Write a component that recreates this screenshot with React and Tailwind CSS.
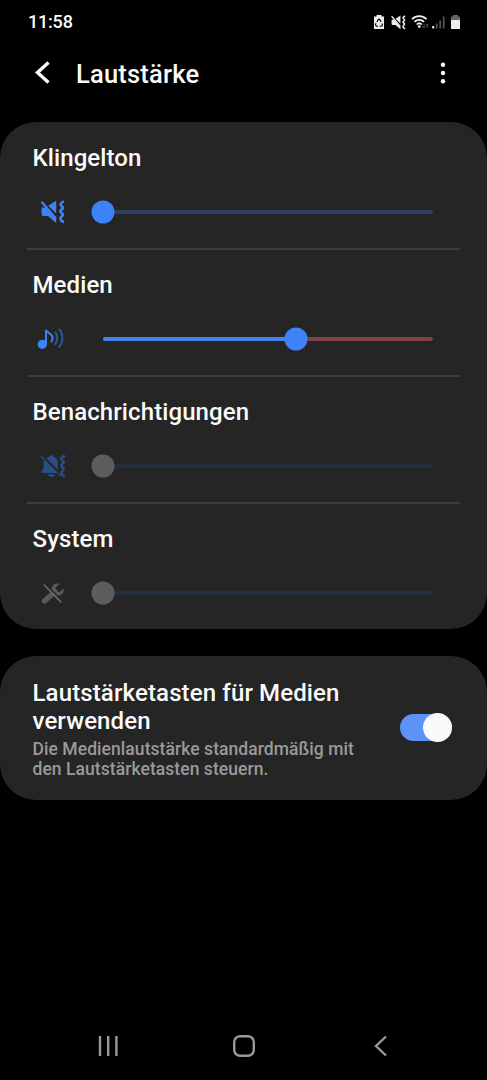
import { useState } from 'react';
import clsx from 'clsx';

function Waves({ x = 0, y = 0 }) {
  return (
    <svg x={x} y={y} width="28" height="28" overflow="visible">
      <path
        d="M25 3.4C20.8 5 21 6.6 22.8 8.2S24.3 10.2 22.5 11.6 21.3 14 22.8 15.2 24.3 17.2 22.5 18.6 20.8 22.6 25 24.2"
        fill="none"
        stroke="currentColor"
        strokeWidth="2.6"
      />
    </svg>
  );
}

function MuteVibrateIcon({ className = 'h-7 w-7' }) {
  return (
    <svg className={className} viewBox="0 0 28 28" fill="currentColor">
      <path d="M9.2 7.8 17.2 2.4v13.2z" />
      <path d="M2.6 9.4h4.8L17.2 20.4v4.6L9 18.1H3.8l-1.2-1.2z" />
      <path d="M2.6 3.8 17 20.4" stroke="currentColor" strokeWidth="2.2" />
      <Waves />
    </svg>
  );
}

function MediaIcon() {
  return (
    <svg className="h-7 w-7" viewBox="0 0 28 28" fill="none" stroke="currentColor" strokeWidth="2">
      <circle cx="6.3" cy="19.3" r="4.6" fill="currentColor" stroke="none" />
      <path d="M10 19.3V4.8c.4 3 6.6 3.6 6.6 8 0 1.8-.5 3-1.5 4.2" />
      <path d="M19 6.6c1.5 2 2.2 4.2 2.2 6.6s-.8 4.600-2.400 6.800" opacity=".55" />
      <path d="M23 4c2.300 2.600 3.400 5.700 3.400 9.100s-1.200 6.500-3.600 9.300" opacity=".55" />
    </svg>
  );
}

function BellMuteIcon() {
  return (
    <svg className="h-7 w-7" viewBox="0 0 28 28" fill="currentColor">
      <path d="M7.2 6.400c.9-1 2-1.600 3.400-1.800 0-2.200 3.400-2.200 3.400 0 3 .8 4.800 3.100 4.800 6.200v4c0 1.500.4 2.700 1 3.800z" />
      <path d="M5.400 8.200 18 21H2.200v-1.500c1.700-1.300 2.400-2.500 2.400-4.400v-4c0-1 .3-2 .8-2.900z" />
      <path d="M8.600 22.200c1.600 3.600 5.800 3.600 7.400 0z" />
      <path d="M2.200 4.200 21.200 23.800" fill="none" stroke="currentColor" strokeWidth="1.400" />
      <path d="M4.600 5 21.600 22.300" fill="none" stroke="#252525" strokeWidth="1.400" />
      <Waves x={0.8} y={0.4} />
    </svg>
  );
}

function SystemIcon() {
  return (
    <svg className="h-7 w-7" viewBox="0 0 28 28">
      <path d="M5.400 22 16 12.800" fill="none" stroke="currentColor" strokeWidth="5.400" strokeLinecap="round" />
      <path
        d="M20.600 4.900c-3.400-1.200-7.800 1-8 5.200l-.2 3 4 4 3.200-.6c3.600-.2 5.900-3.400 4.800-7l-3.700 3.400-3.300-.8-.7-3.500z"
        fill="currentColor"
      />
      <path d="M6.200 4.700 23 22" stroke="#252525" strokeWidth="1.400" />
      <path d="M4.800 5.500 22.300 23.400" stroke="#6a6a6a" strokeWidth="1.700" />
    </svg>
  );
}

function StatusBar() {
  return (
    <div className="flex h-11 items-center justify-between pr-[26px] pl-7">
      <span className="text-[18px] leading-[26px] font-medium tracking-[-0.2px]">11:58</span>
      <div className="flex items-center text-[#ededed]">
        <svg className="mr-[5px] h-4 w-3" viewBox="0 0 12 16">
          <path d="M3.500 1h5v1.500H11V15H1V2.500h2.500z" fill="currentColor" />
          <path d="m3.900 8 1.500-2.600h1.200L8.100 8M8.900 9.500l.6 1.300-.9 1.500H6.700M3.100 9.200l-.7 1.400.9 1.700h1.800" fill="none" stroke="#000" strokeWidth="1.100" />
        </svg>
        <MuteVibrateIcon className="mr-1 h-[17px] w-[17px]" />
        <svg className="mr-[3px] h-4 w-[18px]" viewBox="0 0 18 16" fill="none" stroke="currentColor" strokeWidth="1.700">
          <path d="M1 5.200c4-4 10.500-4 14.500 0M3.400 7.900c2.800-2.700 7-2.700 9.700 0M5.700 10.500c1.500-1.500 3.700-1.500 5.200 0" />
          <circle cx="8.300" cy="12.600" r="1.400" fill="currentColor" stroke="none" />
          <path d="M13 10v4m-1.500-1.500L13 14l1.400-1.500M16.200 14v-4m-1.400 1.500 1.400-1.500 1.400 1.500" stroke="#555" strokeWidth="1" />
        </svg>
        <svg className="mr-[5px] h-4 w-[13px]" viewBox="0 0 13 16">
          <path d="M1.200 12v2.500" stroke="currentColor" strokeWidth="2" />
          <path d="M4.700 9.500v5M8.200 6.500v8M11.700 2.500v12" stroke="#555" strokeWidth="1.700" />
        </svg>
        <svg className="h-4 w-[11px]" viewBox="0 0 11 16">
          <path d="M3 1h5v1.500h2V7H1V2.500h2z" fill="#666" />
          <path d="M1 6h9v9H1z" fill="currentColor" />
        </svg>
      </div>
    </div>
  );
}

const CHANNELS = [
  { name: 'Klingelton', icon: MuteVibrateIcon, value: 0, iconClass: 'text-[#3d82f6]', track: 'bg-[#2b4160]', thumb: 'bg-[#3d82f6]' },
  { name: 'Medien', icon: MediaIcon, value: 58.6, iconClass: 'text-[#3d82f6] -ml-[3px] mr-[3px]', track: 'bg-[#7d4147]', thumb: 'bg-[#3d82f6]' },
  { name: 'Benachrichtigungen', icon: BellMuteIcon, value: 0, iconClass: 'text-[#2b4d86]', track: 'bg-[#262e3c]', thumb: 'bg-[#5c5c5c]' },
  { name: 'System', icon: SystemIcon, value: 0, iconClass: 'text-[#5a5a5a]', track: 'bg-[#262e3c]', thumb: 'bg-[#5c5c5c]' },
];

function VolumeRow({ channel, value, onChange }) {
  const Icon = channel.icon;
  const pick = (e) => {
    const box = e.currentTarget.getBoundingClientRect();
    onChange(Math.max(0, Math.min(100, ((e.clientX - box.left) / box.width) * 100)));
  };

  return (
    <section className="mx-[27px] h-[127px] border-b-2 border-[#3d3d3d] pt-[19px] last:border-0">
      <h2 className="pl-[5.5px] text-[24px] leading-8 font-medium tracking-[0.1px]">{channel.name}</h2>
      <div className="mt-6 flex h-7 items-center pr-[27px] pl-3">
        <span className={clsx('w-7', channel.iconClass)}>
          <Icon />
        </span>
        <div className="ml-auto flex h-6 w-[330px] items-center" onClick={pick}>
          <div className={clsx('relative h-1 w-full rounded-full', channel.track)}>
            <div className="h-full rounded-full bg-[#4684ea]" style={{ width: `${value}%` }} />
            <div
              className={clsx('absolute top-1/2 h-[23px] w-[23px] -translate-x-1/2 -translate-y-1/2 rounded-full', channel.thumb)}
              style={{ left: `${value}%` }}
            />
          </div>
        </div>
      </div>
    </section>
  );
}

export default function App() {
  const [values, setValues] = useState(CHANNELS.map((c) => c.value));
  const [mediaKeys, setMediaKeys] = useState(true);

  return (
    <div className="flex h-[1080px] w-[487px] flex-col overflow-hidden bg-black font-['Roboto',sans-serif] text-[#fafafa]">
      <StatusBar />

      <header className="flex h-[78px] items-start pt-3 pr-[38px] pl-[34px]">
        <button type="button" aria-label="Zurück" className="mt-[4px]">
          <svg className="h-[26px] w-[18px]" viewBox="0 0 18 26" fill="none" stroke="currentColor" strokeWidth="3.400">
            <path d="M14.500 2.500 3.500 12.500l11 10" />
          </svg>
        </button>
        <h1 className="ml-6 text-[25.5px] leading-9 font-medium tracking-[0.2px]">Lautstärke</h1>
        <button type="button" aria-label="Weitere Optionen" className="mt-[5px] ml-auto">
          <svg className="h-6 w-3" viewBox="0 0 12 24" fill="currentColor">
            <circle cx="6" cy="3.700" r="2.200" />
            <circle cx="6" cy="12" r="2.200" />
            <circle cx="6" cy="20.300" r="2.200" />
          </svg>
        </button>
      </header>

      <main className="flex flex-col gap-[27px]">
        <div className="h-[507px] overflow-hidden rounded-[36px] bg-[#252525] pt-px">
          {CHANNELS.map((channel, i) => (
            <VolumeRow
              key={channel.name}
              channel={channel}
              value={values[i]}
              onChange={(v) => setValues(values.map((old, j) => (j === i ? v : old)))}
            />
          ))}
        </div>

        <div className="flex h-36 items-center justify-between rounded-[36px] bg-[#252525] pr-[35px] pl-[32.5px]">
          <div>
            <h2 className="w-[330px] text-[24px] leading-7 font-medium tracking-[0.13px]">Lautstärketasten für Medien verwenden</h2>
            <p className="mt-1 -mb-0.5 w-[340px] text-[17.5px] leading-5 font-medium tracking-[0.06px] text-[#999]">
              Die Medienlautstärke standardmäßig mit den Lautstärketasten steuern.
            </p>
          </div>
          <button
            type="button"
            role="switch"
            aria-checked={mediaKeys}
            aria-label="Lautstärketasten für Medien verwenden"
            onClick={() => setMediaKeys(!mediaKeys)}
            className={clsx('-mt-px flex h-[27px] w-[52px] items-center rounded-full', mediaKeys ? 'justify-end bg-[#5b93f9]' : 'bg-[#666]')}
          >
            <span className="h-[29px] w-[29px] shrink-0 rounded-full bg-[#fafafa]" />
          </button>
        </div>
      </main>

      <nav className="mt-auto flex h-[68px] items-center pl-[97px] text-[#999]">
        <svg className="h-6 w-[22px]" viewBox="0 0 22 24" stroke="currentColor" strokeWidth="2.400">
          <path d="M3 2v20M11.200 2v20M19.400 2v20" />
        </svg>
        <svg className="ml-[113px] h-6 w-6" viewBox="0 0 24 24" fill="none" stroke="currentColor" strokeWidth="2.400">
          <rect x="2.200" y="2.200" width="19.600" height="19.600" rx="6" />
        </svg>
        <svg className="ml-[115px] h-6 w-5" viewBox="0 0 20 24" fill="none" stroke="currentColor" strokeWidth="2.400">
          <path d="M15 2.500 5 12l10 9.500" />
        </svg>
      </nav>
    </div>
  );
}
